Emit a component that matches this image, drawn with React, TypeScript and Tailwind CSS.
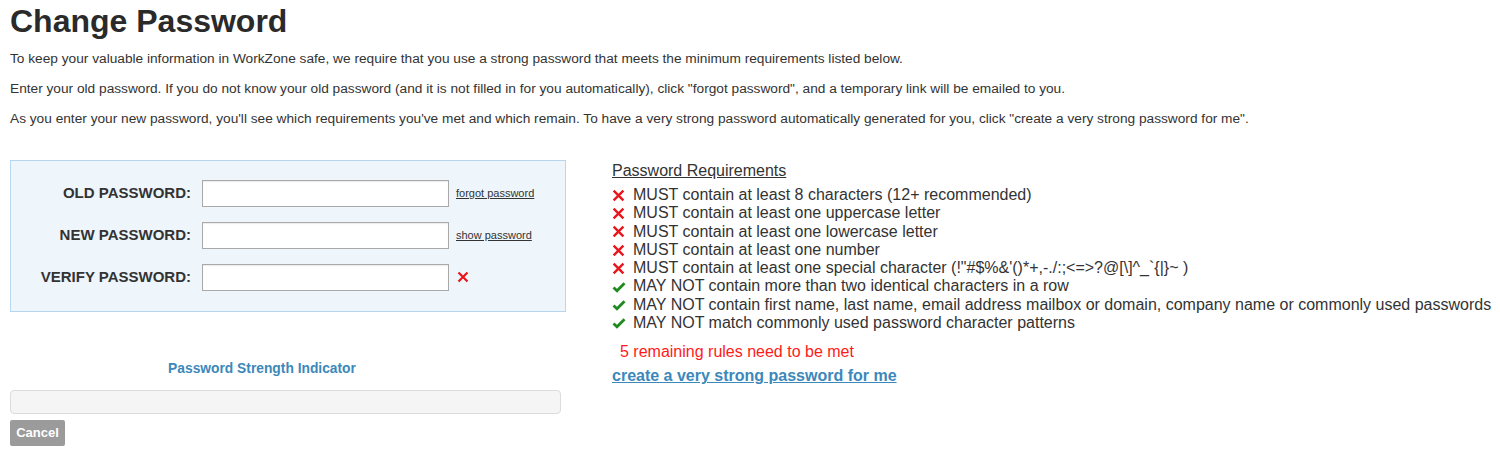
import React from "react";

const rules: { ok: boolean; text: string }[] = [
  { ok: false, text: "MUST contain at least 8 characters (12+ recommended)" },
  { ok: false, text: "MUST contain at least one uppercase letter" },
  { ok: false, text: "MUST contain at least one lowercase letter" },
  { ok: false, text: "MUST contain at least one number" },
  { ok: false, text: "MUST contain at least one special character (!\"#$%&'()*+,-./:;<=>?@[\\]^_`{|}~ )" },
  { ok: true, text: "MAY NOT contain more than two identical characters in a row" },
  { ok: true, text: "MAY NOT contain first name, last name, email address mailbox or domain, company name or commonly used passwords" },
  { ok: true, text: "MAY NOT match commonly used password character patterns" },
];

function Cross({ className = "" }: { className?: string }) {
  return (
    <svg viewBox="0 0 12 12" className={className}>
      <path d="M1.5 1.5 L10.5 10.5 M10.5 1.5 L1.5 10.5" stroke="#e8161b" strokeWidth="2.2" strokeLinecap="butt" />
    </svg>
  );
}

function Check({ className = "" }: { className?: string }) {
  return (
    <svg viewBox="0 0 14 12" className={className}>
      <path d="M1.5 6.5 L5 9.8 L12.5 2.2" fill="none" stroke="#1f8a1f" strokeWidth="2.8" />
    </svg>
  );
}

function Field({ label, children }: { label: string; children?: React.ReactNode }) {
  return (
    <div className="flex items-center h-[26px]">
      <label className="w-[191px] text-right pr-[11px] font-bold text-[15px] text-[#333]">
        {label}
      </label>
      <input
        type="password"
        className="w-[247px] h-[27px] bg-white border border-[#a9a9a9] shadow-[inset_0_1px_1px_rgba(0,0,0,0.08)] outline-none"
      />
      <div className="pl-[7px] flex items-center">{children}</div>
    </div>
  );
}

export default function App() {
  return (
    <div className="w-[1500px] h-[464px] bg-white text-[#333] pl-[10px] pt-[2px] overflow-hidden" style={{ fontFamily: '"Liberation Sans", Arial, sans-serif' }}>
      <h1 className="text-[32px] font-bold leading-[38px] text-[#2a2a2a]">Change Password</h1>
      <div className="mt-[4px] text-[13.7px] leading-[30px] text-[#333]">
        <p>To keep your valuable information in WorkZone safe, we require that you use a strong password that meets the minimum requirements listed below.</p>
        <p>Enter your old password. If you do not know your old password (and it is not filled in for you automatically), click "forgot password", and a temporary link will be emailed to you.</p>
        <p>As you enter your new password, you'll see which requirements you've met and which remain. To have a very strong password automatically generated for you, click "create a very strong password for me".</p>
      </div>

      <div className="flex mt-[26px]">
        <div className="w-[556px] flex flex-col">
          <div className="h-[152px] bg-[#eef5fb] border border-[#b7d5ec] pt-[19px] flex flex-col gap-[16px]">
            <Field label="OLD PASSWORD:">
              <a href="#" className="text-[11px] underline text-[#333]">forgot password</a>
            </Field>
            <Field label="NEW PASSWORD:">
              <a href="#" className="text-[11px] underline text-[#333]">show password</a>
            </Field>
            <Field label="VERIFY PASSWORD:">
              <Cross className="w-[12px] h-[12px] ml-[1px]" />
            </Field>
          </div>
          <div className="mt-[47px] text-center pr-[52px] text-[13.8px] font-bold text-[#3c88ba]">Password Strength Indicator</div>
          <div className="mt-[10px] w-[551px] h-[24px] rounded-[4px] bg-[#f5f5f5] border border-[#dcdcdc]" />
          <button className="mt-[6px] w-[55px] h-[26px] rounded-[2px] bg-[#9b9b9b] text-white font-bold text-[13px]">Cancel</button>
        </div>

        <div className="ml-[46px] flex flex-col text-[16px] text-[#333]">
          <div className="underline leading-[20px] mt-[1px]">Password Requirements</div>
          <ul className="mt-[5px] leading-[18.3px]">
            {rules.map((r) => (
              <li key={r.text} className="flex items-center">
                <span className="w-[21px] flex items-center">
                  {r.ok ? <Check className="w-[14px] h-[12px]" /> : <Cross className="w-[13px] h-[13px]" />}
                </span>
                <span>{r.text}</span>
              </li>
            ))}
          </ul>
          <div className="mt-[10px] ml-[8px] text-[#ff1a1a] leading-[20px]">5 remaining rules need to be met</div>
          <a href="#" className="mt-[4px] font-bold underline text-[#3c88ba] leading-[20px]">create a very strong password for me</a>
        </div>
      </div>
    </div>
  );
}
